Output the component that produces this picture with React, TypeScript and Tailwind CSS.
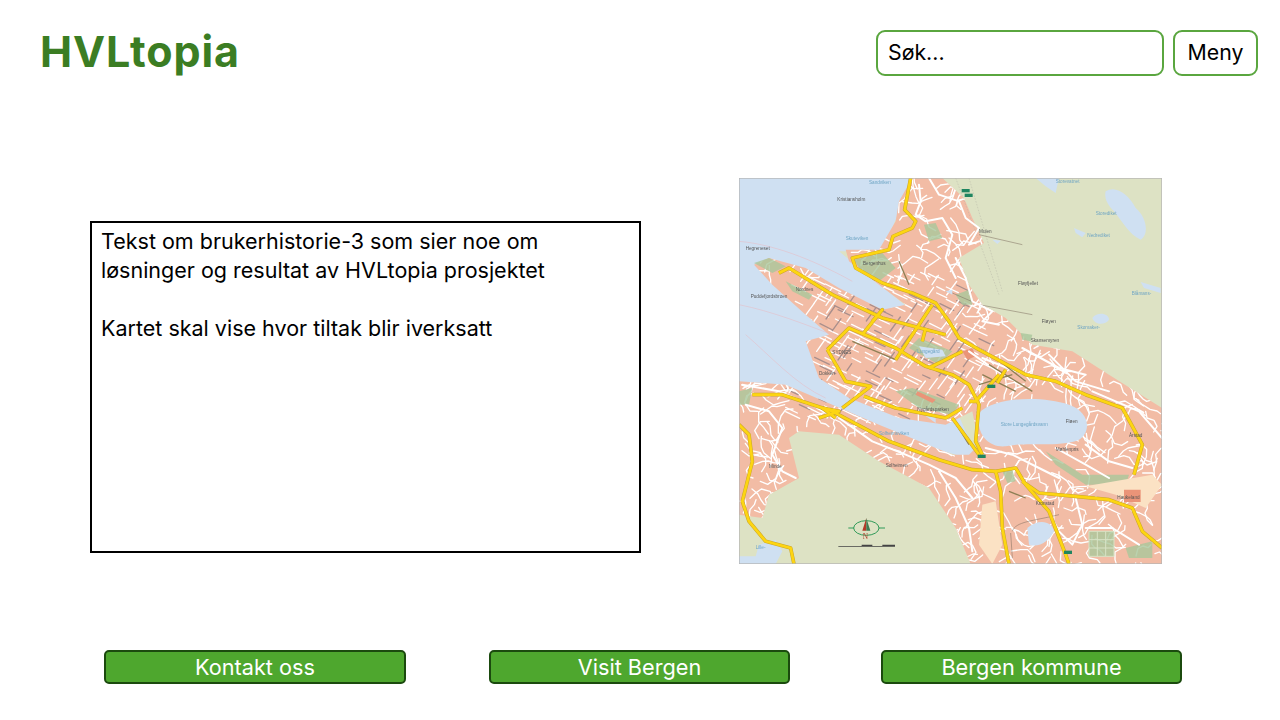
const URBAN =
  "M520 0 H610 L675 60 L700 120 L735 195 L660 240 L690 320 L730 380 L800 420 L850 470 L880 500 L1000 520 L1110 590 L1269 690 V1158 H695 L650 1050 L570 930 L420 850 L300 770 L180 760 L150 780 L180 900 L90 950 L70 1020 L0 1010 V610 L140 620 L280 680 L420 740 L640 830 L690 830 L720 800 L700 700 L620 740 L480 720 L330 660 L240 600 L200 490 L270 470 L200 410 L100 320 L45 260 L90 240 L200 270 L300 330 L430 395 L500 380 L420 320 L330 250 L320 215 L420 215 L470 130 L480 70 Z";

// Seeded street network: short winding white lines, clipped to the built-up area.
function makeStreets() {
  let seed = 17;
  const rnd = () => {
    seed = (seed * 16807) % 2147483647;
    return seed / 2147483647;
  };
  const out: { d: string; grey: boolean }[] = [];
  for (let y = 0; y < 1158; y += 28) {
    for (let x = 0; x < 1269; x += 28) {
      const central = x > 130 && x < 720 && y > 260 && y < 720;
      if (rnd() < (central ? 0.12 : 0.6)) continue;
      const px = x + rnd() * 20;
      const py = y + rnd() * 20;
      if (central) {
        const a = rnd() < 0.62 ? 0.45 : -0.95;
        const l = 24 + rnd() * 30;
        out.push({
          d: `M${px.toFixed(0)} ${py.toFixed(0)} L${(px + Math.cos(a) * l).toFixed(0)} ${(py + Math.sin(a) * l).toFixed(0)}`,
          grey: rnd() < 0.22,
        });
      } else {
        let a = rnd() * 6.28;
        let cx = px;
        let cy = py;
        let d = `M${cx.toFixed(0)} ${cy.toFixed(0)}`;
        for (let i = 0; i < 4; i++) {
          a += (rnd() - 0.5) * 2.2;
          const l = 12 + rnd() * 18;
          cx += Math.cos(a) * l;
          cy += Math.sin(a) * l;
          d += ` L${cx.toFixed(0)} ${cy.toFixed(0)}`;
        }
        out.push({ d, grey: false });
      }
    }
  }
  return out;
}
const streets = makeStreets();

const whiteRoads = [
  "M540 20 L545 70 L530 110 L560 130 L610 120 L640 170 L620 240 L650 300",
  "M570 0 L600 50 L660 70 L680 120 L720 150 L690 200 L720 190",
  "M650 240 L680 300 L700 370 L760 400 L730 430 L780 440",
  "M690 520 L760 570 L810 600 M730 540 L830 580 M850 510 L960 570 L1040 590 M930 530 L1010 610 L1110 640",
  "M1060 640 L1200 700 L1269 780",
  "M10 620 L120 640 L240 690 M20 680 L90 700 L130 750 L100 830 L130 880 L170 900",
  "M300 720 L400 790 L500 830 L570 860 L650 900 L700 960 M600 880 L650 960 L690 1050 L700 1120",
  "M740 810 L820 830 L900 870 L960 900 M950 810 L1040 860 L1110 900 M1040 800 L1110 850 L1180 870",
  "M1010 960 L1030 1040 L1000 1100 L960 1060 M1040 1050 L1120 1050 L1200 1100",
];

const darkRoads = [
  "M480 250 L510 320",
  "M340 490 L470 545 M265 515 L320 610",
  "M640 720 L690 800 M860 960 L810 940",
  "M720 620 L820 590 M730 590 L830 640 M750 560 L880 640 M770 540 L860 610",
];

const yellowRoads = [
  "M515 0 L497 95 L530 130 L520 150 L462 175 L450 215 L340 240 L350 270 L430 315 L520 345 L590 375 L630 430 L660 480 L720 515 L860 590 L950 610 L1040 650 L1150 690 L1210 800 L1185 890",
  "M40 650 L130 650 L280 700 L450 790 L600 845 L700 875 L770 880 L830 870 L860 920 L930 1000 L980 1130 L990 1158",
  "M770 880 L785 940 L790 1050 L810 1158",
  "M850 910 L900 945 L1010 955 L1110 965 L1180 990 L1210 1060 L1269 1110",
  "M0 740 L30 770 L40 850 L10 970 L30 1030 L80 1090 L155 1110 L165 1158",
  "M120 285 L150 270 L280 350 L430 420 L620 470",
  "M265 515 L330 450 L470 510 L560 565 L640 590 L690 620 L720 680 L710 790 L730 830",
  "M690 670 L710 670 L780 590 M800 575 L775 615",
  "M570 570 L670 520 M470 545 L580 380 M400 430 L430 395 L370 470 M560 450 L550 490",
  "M265 515 L320 610 L395 625 L310 690 M375 655 L470 690 L620 720 L670 690",
  "M640 720 L720 830 M240 720 L300 700 L250 690 L290 720",
];

const labels: [number, number, string, string][] = [
  [390, 18, "Sandviken", "#6fa5c4"],
  [295, 68, "Kristiansholm", "#555555"],
  [320, 186, "Skuteviken", "#6fa5c4"],
  [20, 216, "Hegreneset", "#555555"],
  [372, 262, "Bergenhus", "#555555"],
  [35, 360, "Puddefjordsbroen", "#555555"],
  [170, 340, "Nordnes", "#555555"],
  [280, 528, "SYDNES", "#555555"],
  [240, 592, "Dokken", "#555555"],
  [535, 525, "Lungegård", "#6fa5c4"],
  [535, 700, "Nygårdsparken", "#555555"],
  [420, 770, "Solheimsviken", "#6fa5c4"],
  [785, 745, "Store Lungegårdsvann", "#6fa5c4"],
  [980, 735, "Fløen", "#555555"],
  [90, 870, "Minde", "#555555"],
  [720, 166, "Mulen", "#555555"],
  [837, 320, "Fløyfjellet", "#555555"],
  [1070, 112, "Storediket", "#6fa5c4"],
  [1045, 178, "Nedrediket", "#6fa5c4"],
  [950, 16, "Storevatnet", "#6fa5c4"],
  [1178, 352, "Blåmans-", "#6fa5c4"],
  [1015, 452, "Skomaker-", "#6fa5c4"],
  [908, 436, "Fløyen", "#555555"],
  [875, 492, "Skansemyren", "#555555"],
  [1170, 778, "Årstad", "#555555"],
  [950, 818, "Møhlenpris", "#555555"],
  [440, 866, "Solheimen", "#555555"],
  [890, 980, "Kronstad", "#555555"],
  [1135, 962, "Haukeland", "#555555"],
  [50, 1112, "Lille-", "#6fa5c4"],
];

const signs: [number, number][] = [
  [668, 33], [677, 47], [745, 620], [716, 830], [975, 1118],
];

function BergenMap() {
  return (
    <svg viewBox="0 0 1269 1158" className="w-full h-full block blur-[0.4px]">
      <defs>
        <clipPath id="urban-clip">
          <path d={URBAN} />
        </clipPath>
      </defs>
      <rect width="1269" height="1158" fill="#dde2c4" />
      <path d="M0 0 H520 L480 100 L440 200 L420 220 L300 220 L520 400 L720 850 L400 760 L0 620 Z" fill="#cfe0f2" />
      <path d={URBAN} fill="#f2bca5" />
      <g clipPath="url(#urban-clip)">
        {streets.map((s, i) => (
          <path key={i} d={s.d} fill="none" stroke={s.grey ? "#a98f8c" : "#ffffff"} strokeWidth="4" strokeLinejoin="round" strokeLinecap="round" />
        ))}
      </g>
      <path d="M720 705 C760 660 900 650 990 680 C1050 700 1060 760 1020 785 C960 810 860 790 800 805 C750 810 710 770 720 705 Z" fill="#cfe0f2" />
      <path d="M1100 40 C1130 20 1170 50 1190 90 C1225 120 1230 170 1205 185 C1170 170 1150 130 1125 100 C1105 80 1095 60 1100 40 Z M1005 150 L1040 165 L1030 178 L1010 165 Z M1060 420 C1075 400 1110 405 1110 425 C1100 440 1070 445 1060 420 Z M1205 312 L1265 330 L1265 345 L1215 330 Z M890 0 H960 L950 45 L920 25 Z M760 185 L785 188 L775 198 Z M620 340 L640 335 L640 350 Z" fill="#cfe0f2" />
      <path d="M865 1050 C900 1020 940 1030 945 1060 C930 1090 900 1110 870 1100 Z M0 1135 H50 L60 1100 L110 1085 L130 1120 L110 1158 H0 Z M555 710 L590 715 L590 735 Z" fill="#cfe0f2" />
      <path d="M45 255 L90 240 L140 265 L100 285 Z M140 310 L220 350 L210 365 L160 340 Z M345 245 L430 225 L470 270 L420 310 L370 285 Z M555 140 L590 135 L610 180 L570 190 Z M650 350 L690 335 L700 380 L670 380 Z M510 510 L540 480 L640 520 L600 560 Z M470 640 L520 630 L660 680 L640 710 L540 690 Z M0 640 L40 630 L30 680 L0 680 Z M920 820 L1030 890 L1170 890 L1160 920 L1040 920 L950 860 Z M790 880 L820 875 L830 910 L805 915 Z M845 465 L880 470 L875 490 L850 485 Z M1050 1060 H1125 V1135 H1050 Z M1160 1110 L1240 1090 L1240 1140 L1170 1140 Z" fill="#a9c79b" opacity="0.8" />
      <path d="M540 505 L610 515 L620 535 L560 540 Z" fill="#cfe0f2" />
      <path d="M1040 925 L1240 890 L1269 920 L1220 990 L1130 950 Z M730 980 L770 970 L790 1100 L760 1158 L720 1100 Z" fill="#fbe2c4" />
      <path d="M1155 935 H1205 V972 H1155 Z M670 520 L700 510 L710 535 L685 545 Z M535 640 L590 665 L580 675 L530 650 Z" fill="#ea9478" />
      <path d="M0 190 C120 200 250 260 340 310 M0 380 C100 400 200 440 280 470 M20 470 C90 530 170 620 260 660" fill="none" stroke="#e8b9c0" strokeWidth="1.5" />
      <path d="M650 0 L780 350 M690 0 L790 340" fill="none" stroke="#b9b9a8" strokeWidth="1.5" strokeDasharray="5 4" />
      <path d="M640 345 L720 380 L880 410 M720 170 L850 200 M820 1060 C830 1030 880 1030 960 1010 M815 1065 L820 1140" fill="none" stroke="#7a6a5c" strokeWidth="1.5" />
      {whiteRoads.map((d) => (
        <path key={d} d={d} fill="none" stroke="#ffffff" strokeWidth="6" strokeLinejoin="round" strokeLinecap="round" />
      ))}
      {darkRoads.map((d) => (
        <path key={d} d={d} fill="none" stroke="#8d7f55" strokeWidth="4" strokeLinejoin="round" />
      ))}
      {yellowRoads.map((d) => (
        <path key={d} d={d} fill="none" stroke="#c9a52a" strokeWidth="11" strokeLinejoin="round" />
      ))}
      {yellowRoads.map((d) => (
        <path key={d} d={d} fill="none" stroke="#fdd512" strokeWidth="8" strokeLinejoin="round" />
      ))}
      <path d="M1050 1060 H1125 V1135 H1050 Z M1075 1060 V1135 M1100 1060 V1135 M1050 1085 H1125 M1050 1110 H1125" fill="none" stroke="#d8e3c5" strokeWidth="3" />
      {labels.map(([x, y, t, c]) => (
        <text key={t} x={x} y={y} fontSize="14" fill={c} fontFamily="Liberation Sans, sans-serif">
          {t}
        </text>
      ))}
      {signs.map(([x, y]) => (
        <rect key={`${x}-${y}`} x={x} y={y} width="24" height="10" fill="#1f8560" />
      ))}
      <ellipse cx="382" cy="1050" rx="38" ry="22" fill="none" stroke="#2f9a58" strokeWidth="3" />
      <path d="M328 1050 H345 M420 1050 H438" stroke="#2f9a58" strokeWidth="3" />
      <path d="M382 1020 L370 1058 H382 Z" fill="#b23a2a" />
      <path d="M382 1020 L394 1058 H382 Z" fill="#3d7d55" />
      <text x="371" y="1082" fontSize="22" fill="#b23a2a" fontFamily="Liberation Serif, serif">N</text>
      <path d="M298 1104 H368 V1100 H400 V1104 H430 V1100 H468 V1106 H298 Z" fill="#444444" />
      <rect x="0.5" y="0.5" width="1268" height="1157" fill="none" stroke="#b5b5b5" strokeWidth="3" />
    </svg>
  );
}

const links = [
  { label: "Kontakt oss", cls: "ml-[104px] w-[302px]" },
  { label: "Visit Bergen", cls: "ml-[83px] w-[301px]" },
  { label: "Bergen kommune", cls: "ml-[91px] w-[301px]" },
];

export default function App() {
  return (
    <div className="w-[1280px] h-[720px] bg-white flex flex-col overflow-hidden font-['Inter',sans-serif] text-black">
      <header className="flex items-start justify-between pl-[40px] pr-[22px] pt-[30px] h-[178px] shrink-0">
        <h1 className="text-[#3b7d23] text-[43px] leading-[42px] font-bold tracking-[0.85px]">HVLtopia</h1>
        <div className="flex gap-[9px]">
          <div className="w-[288px] h-[46px] rounded-[9px] border-2 border-[#5aa63f] flex items-center pl-[10px] text-[21.3px]">Søk...</div>
          <div className="w-[85px] h-[46px] rounded-[9px] border-2 border-[#5aa63f] flex items-center justify-center text-[21.3px]">Meny</div>
        </div>
      </header>
      <main className="flex items-start pl-[90px] h-[472px] shrink-0">
        <div className="w-[551px] h-[332px] mt-[43px] border-2 border-black pl-[9px] pr-[12px] pt-[4px] text-[21.5px] leading-[29px]">
          <p>Tekst om brukerhistorie-3 som sier noe om<br />løsninger og resultat av HVLtopia prosjektet</p>
          <p className="mt-[29px]">Kartet skal vise hvor tiltak blir iverksatt</p>
        </div>
        <div className="w-[423px] h-[386px] ml-[98px]">
          <BergenMap />
        </div>
      </main>
      <footer className="flex items-start">
        {links.map((l) => (
          <a key={l.label} className={`${l.cls} h-[34px] rounded-[5px] bg-[#4ea72e] border-2 border-[#1b4a0e] flex items-center justify-center text-white text-[21.7px]`}>
            {l.label}
          </a>
        ))}
      </footer>
    </div>
  );
}
